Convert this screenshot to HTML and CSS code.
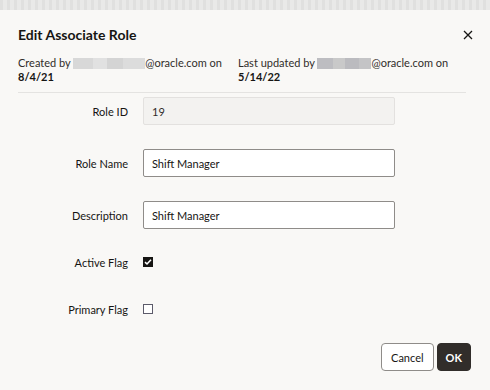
FILE: index.html
```html
<!DOCTYPE html>
<html lang="en">
<head>
    <meta charset="UTF-8">
    <meta name="viewport" content="width=device-width, initial-scale=1.0">
    <title>Edit Associate Role</title>
    <link rel="stylesheet" href="styles.css">
</head>
<body>
    <div class="backdrop"></div>
    <div class="dialog">
        <div class="dialog-header">
            <h1 class="dialog-title">Edit Associate Role</h1>
            <button class="close-btn" aria-label="Close">
                <svg width="10" height="10" viewBox="0 0 10 10">
                    <path d="M1 1 L9 9 M9 1 L1 9" stroke="#161513" stroke-width="1.3" fill="none"/>
                </svg>
            </button>
        </div>
        <div class="meta">
            <div class="meta-item">
                Created by <span class="redacted redacted-a"></span>@oracle.com on<br>
                <b>8/4/21</b>
            </div>
            <div class="meta-item">
                Last updated by <span class="redacted redacted-b"></span>@oracle.com on<br>
                <b>5/14/22</b>
            </div>
        </div>
        <div class="form">
            <label class="label">Role ID</label>
            <div class="input readonly">19</div>

            <label class="label">Role Name</label>
            <div class="input">Shift Manager</div>

            <label class="label">Description</label>
            <div class="input">Shift Manager</div>

            <label class="label check-label">Active Flag</label>
            <div class="check-cell">
                <span class="checkbox checked">
                    <svg width="8" height="8" viewBox="0 0 8 8">
                        <path d="M1 4.2 L3 6 L7 1.8" stroke="#fff" stroke-width="1.6" fill="none"/>
                    </svg>
                </span>
            </div>

            <label class="label check-label">Primary Flag</label>
            <div class="check-cell">
                <span class="checkbox"></span>
            </div>
        </div>
        <div class="actions">
            <button class="btn">Cancel</button>
            <button class="btn btn-primary">OK</button>
        </div>
    </div>
</body>
</html>
```

FILE: styles.css
```css
body {
    margin: 0;
    font-family: Lato, "Noto Sans", sans-serif;
    color: #161513;
    background: #f9f8f6;
}
.backdrop {
    height: 10px;
    background:
        repeating-linear-gradient(90deg, rgba(0,0,0,0.04) 0 3px, transparent 3px 7px),
        #e9e9e8;
}
.dialog {
    background: #f9f8f6;
    height: 380px;
    padding: 0 19px 0 18px;
    box-sizing: border-box;
    display: flex;
    flex-direction: column;
}
.dialog-header {
    display: flex;
    justify-content: space-between;
    align-items: flex-start;
    padding-top: 15px;
}
.dialog-title {
    margin: 0;
    font-size: 14px;
    font-weight: bold;
    line-height: 19px;
}
.close-btn {
    background: none;
    border: none;
    padding: 0;
    margin: 0 -7px 0 0;
    width: 20px;
    height: 20px;
    display: flex;
    align-items: center;
    justify-content: center;
}
.meta {
    display: flex;
    margin-top: 11px;
    font-size: 11px;
    line-height: 14px;
    color: #312d2a;
    padding-bottom: 8px;
    border-bottom: 1px solid #e4e3e1;
    margin-right: 5px;
}
.meta-item {
    width: 220px;
}
.meta-item b {
    color: #161513;
}
.redacted {
    display: inline-block;
    height: 11px;
    vertical-align: -2px;
}
.redacted-a {
    width: 72px;
    background: linear-gradient(90deg, #d8d8d8 0 20px, #e1e1e1 20px 34px, #d4d4d4 34px 50px, #dcdcdc 50px 72px);
}
.redacted-b {
    width: 54px;
    background: linear-gradient(90deg, #bdbdc1 0 16px, #c9c9c9 16px 28px, #bbbbbf 28px 42px, #c4c4c6 42px 54px);
}
.form {
    display: grid;
    grid-template-columns: 110px 252px;
    column-gap: 15px;
    row-gap: 24px;
    margin-top: 4px;
    font-size: 11px;
}
.label {
    text-align: right;
    align-self: center;
    color: #161513;
}
.input {
    height: 28px;
    box-sizing: border-box;
    border: 1px solid #8f8c89;
    border-radius: 2px;
    background: #fff;
    padding: 0 8px;
    display: flex;
    align-items: center;
    font-size: 11px;
}
.input.readonly {
    background: #f3f2f0;
    border-color: #e3e1df;
    color: #312d2a;
}
.check-label {
    margin-top: -5px;
}
.check-cell {
    height: 28px;
    display: flex;
    align-items: center;
    margin-top: -5px;
}
.checkbox {
    width: 10px;
    height: 10px;
    box-sizing: border-box;
    border: 1px solid #5c5b6a;
    background: #fff;
    display: flex;
    align-items: center;
    justify-content: center;
}
.checkbox.checked {
    background: #161513;
    border-color: #161513;
}
.actions {
    display: flex;
    justify-content: flex-end;
    gap: 3px;
    margin-top: auto;
    margin-bottom: 19px;
}
.btn {
    height: 28px;
    padding: 0 9px;
    font-family: inherit;
    font-size: 11px;
    color: #161513;
    background: #fff;
    border: 1px solid #8f8c89;
    border-radius: 4px;
}
.btn-primary {
    padding: 0 8px;
    background: #312d2a;
    border-color: #312d2a;
    color: #fff;
    font-weight: bold;
}
```
